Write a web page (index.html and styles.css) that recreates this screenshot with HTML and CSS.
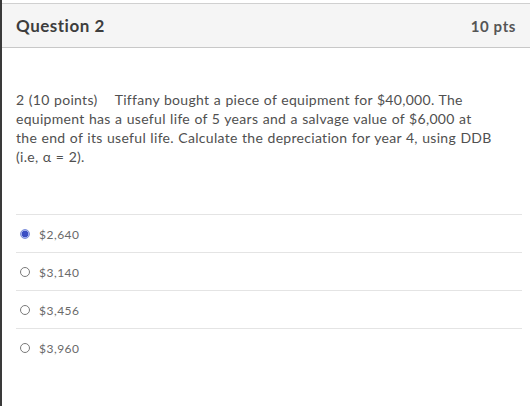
FILE: index.html
```html
<!DOCTYPE html>
<html>
<head>
<meta charset="utf-8">
<link rel="stylesheet" href="styles.css">
</head>
<body>
<div class="frame">
  <div class="question">
    <div class="header">
      <span class="title">Question 2</span>
      <span class="pts">10 pts</span>
    </div>
    <div class="content">
      <p class="text">2 (10 points)&nbsp;&nbsp;&nbsp; Tiffany bought a piece of equipment for $40,000. The<br>equipment has a useful life of 5 years and a salvage value of $6,000 at<br>the end of its useful life. Calculate the depreciation for year 4, using DDB<br>(i.e, α = 2).</p>
      <div class="answers">
        <label class="answer"><span class="radio checked"></span><span class="val">$2,640</span></label>
        <label class="answer"><span class="radio"></span><span class="val">$3,140</span></label>
        <label class="answer"><span class="radio"></span><span class="val">$3,456</span></label>
        <label class="answer"><span class="radio"></span><span class="val">$3,960</span></label>
      </div>
    </div>
  </div>
</div>
</body>
</html>
```

FILE: styles.css
```css
html, body {
  margin: 0;
  padding: 0;
  background: #ffffff;
}
body {
  font-family: Lato, "Open Sans", "Liberation Sans", sans-serif;
  color: #555;
}
.frame {
  width: 532px;
  height: 406px;
  border-left: 2px solid #3a3a3a;
  box-sizing: border-box;
  padding-top: 3px;
  padding-right: 2px;
}
.question {
  display: flex;
  flex-direction: column;
}
.header {
  display: flex;
  justify-content: space-between;
  align-items: center;
  height: 43px;
  padding: 0 14px 0 14px;
  background: #f5f5f5;
  border-top: 1px solid #d0d0d0;
  border-bottom: 1px solid #c8c8c8;
}
.title {
  font-weight: bold;
  font-size: 17px;
  letter-spacing: 0.5px;
  color: #3d3d3d;
}
.pts {
  font-weight: bold;
  font-size: 15px;
  letter-spacing: 0.6px;
  color: #555;
}
.content {
  padding: 42px 14px 0 14px;
}
.text {
  margin: 0;
  font-size: 14px;
  letter-spacing: 0.3px;
  word-spacing: 0.5px;
  line-height: 19px;
  color: #505050;
  white-space: nowrap;
}
.answers {
  margin-top: 48px;
  display: flex;
  flex-direction: column;
  width: 506px;
}
.answer {
  display: flex;
  align-items: center;
  gap: 9px;
  height: 38px;
  border-top: 1px solid #e4e4e4;
  padding-left: 4px;
  padding-top: 1px;
  box-sizing: border-box;
}
.radio {
  width: 10px;
  height: 10px;
  border-radius: 50%;
  border: 1px solid #7a7a7a;
  background: #fff;
  box-sizing: border-box;
}
.radio.checked {
  border: 1px solid #7d8fdc;
  background: radial-gradient(circle, #3b4fc4 0 3px, #a3b0e8 3.5px);
}
.val {
  font-size: 12px;
  letter-spacing: 0.5px;
  color: #6a6a6a;
}
```
